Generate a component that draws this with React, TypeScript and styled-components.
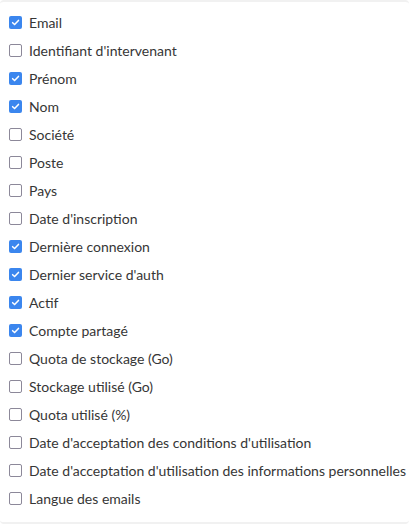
import React from "react";
import styled, { createGlobalStyle } from "styled-components";

const Global = createGlobalStyle`
  html, body { margin: 0; padding: 0; background: #fff; }
  body { font-family: Lato, "Open Sans", sans-serif; }
`;

const Card = styled.div`
  box-sizing: border-box;
  width: 409px;
  height: 524px;
  border-top: 2px solid #f1f1f1;
  border-bottom: 2px solid #f1f1f1;
  border-radius: 4px;
  padding: 6px 0 8px 0;
  display: flex;
  flex-direction: column;
`;

const Row = styled.label`
  display: flex;
  align-items: center;
  height: 28px;
  padding-left: 9px;
  gap: 7px;
  font-size: 14px;
  color: #363636;
  cursor: pointer;
`;

const Box = styled.span<{ $checked: boolean }>`
  box-sizing: border-box;
  width: 13px;
  height: 13px;
  border-radius: 2px;
  display: inline-flex;
  align-items: center;
  justify-content: center;
  background: ${(p) => (p.$checked ? "#3b86ee" : "#fff")};
  border: ${(p) => (p.$checked ? "none" : "1.5px solid #8c8899")};
  flex-shrink: 0;
`;

const items: [string, boolean][] = [
  ["Email", true],
  ["Identifiant d'intervenant", false],
  ["Prénom", true],
  ["Nom", true],
  ["Société", false],
  ["Poste", false],
  ["Pays", false],
  ["Date d'inscription", false],
  ["Dernière connexion", true],
  ["Dernier service d'auth", true],
  ["Actif", true],
  ["Compte partagé", true],
  ["Quota de stockage (Go)", false],
  ["Stockage utilisé (Go)", false],
  ["Quota utilisé (%)", false],
  ["Date d'acceptation des conditions d'utilisation", false],
  ["Date d'acceptation d'utilisation des informations personnelles", false],
  ["Langue des emails", false],
];

export default function App() {
  return (
    <>
      <Global />
      <Card>
        {items.map(([label, checked]) => (
          <Row key={label}>
            <Box $checked={checked}>
              {checked && (
                <svg width="9" height="9" viewBox="0 0 10 10">
                  <path d="M1.8 5.2 L4 7.3 L8.3 2.7" fill="none" stroke="#fff" strokeWidth="1.7" strokeLinecap="round" strokeLinejoin="round" />
                </svg>
              )}
            </Box>
            {label}
          </Row>
        ))}
      </Card>
    </>
  );
}
